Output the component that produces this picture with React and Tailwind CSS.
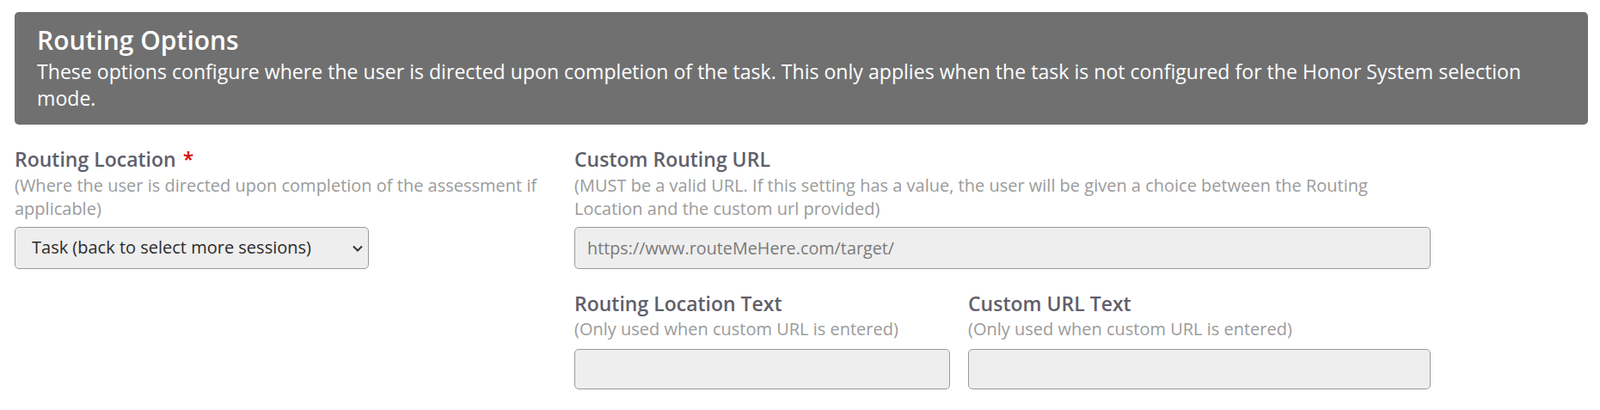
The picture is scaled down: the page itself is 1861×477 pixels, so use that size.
import React from 'react'

const Field = ({ label, hint, required, children, className = '', gap = 'mt-[8px]' }) => {
  return (
    <div className={className}>
      <label className="block text-[23px] font-semibold leading-[27.6px] text-[#5f5f6b]">
        {label}
        {required && <span className="ml-2 text-[#e00000]">*</span>}
      </label>
      <div className="mt-[2px] text-[20px] leading-[27px] text-[#9b9b9b]">{hint}</div>
      <div className={gap}>{children}</div>
    </div>
  )
}

const TextBox = ({ value = '', className = '' }) => (
  <input
    type="text"
    defaultValue={value}
    className={`block w-full rounded-[5px] border border-[#9a9a9a] bg-[#eeeeee] px-[14px] text-[19.8px] text-[#7a7a7a] outline-none ${className}`}
  />
)

export default function App() {
  return (
    <div className="min-h-[477px] bg-white font-['Open_Sans',sans-serif]">
      <div className="pt-[14px] pl-[17px] pr-[14px]">
        <div className="h-[131px] rounded-[5px] bg-[#707070] pl-[26px] pr-[30px] pt-[15px] text-white">
          <h4 className="text-[30px] font-semibold leading-[36px]">Routing Options</h4>
          <p className="mt-[3px] text-[23.1px] leading-[31.3px]">
            These options configure where the user is directed upon completion of the task. This only applies when the task is not configured for the Honor System selection mode.
          </p>
        </div>
      </div>

      <div className="flex gap-[30px] pl-[17px] pt-[27px]">
        <Field
          className="w-[621px]"
          label="Routing Location"
          required
          hint="(Where the user is directed upon completion of the assessment if applicable)"
        >
          <div className="relative w-[412px]">
            <select className="block h-[49px] w-full appearance-none rounded-[5px] border border-[#9a9a9a] bg-[#eeeeee] pl-[19px] pr-10 text-[20px] text-[#2b2b2b] outline-none">
              <option>Task (back to select more sessions)</option>
            </select>
            <svg
              className="pointer-events-none absolute right-[6px] top-[18px] h-[14px] w-[14px]"
              viewBox="0 0 14 14"
              fill="none"
              stroke="#333"
              strokeWidth="2"
            >
              <path d="M2 4.5 L7 9.5 L12 4.5" />
            </svg>
          </div>
        </Field>

        <div className="w-[996px]">
          <Field
            label="Custom Routing URL"
            hint={
              <span className="block max-w-[940px]">
                (MUST be a valid URL. If this setting has a value, the user will be given a choice between the Routing Location and the custom url provided)
              </span>
            }
          >
            <TextBox value="https://www.routeMeHere.com/target/" className="h-[49px]" />
          </Field>

          <div className="mt-[27px] flex gap-[21px]">
            <Field className="w-[437px]" gap="mt-[10px]" label="Routing Location Text" hint="(Only used when custom URL is entered)">
              <TextBox className="h-[47px]" />
            </Field>
            <Field className="w-[538px]" gap="mt-[10px]" label="Custom URL Text" hint="(Only used when custom URL is entered)">
              <TextBox className="h-[47px]" />
            </Field>
          </div>
        </div>
      </div>
    </div>
  )
}
